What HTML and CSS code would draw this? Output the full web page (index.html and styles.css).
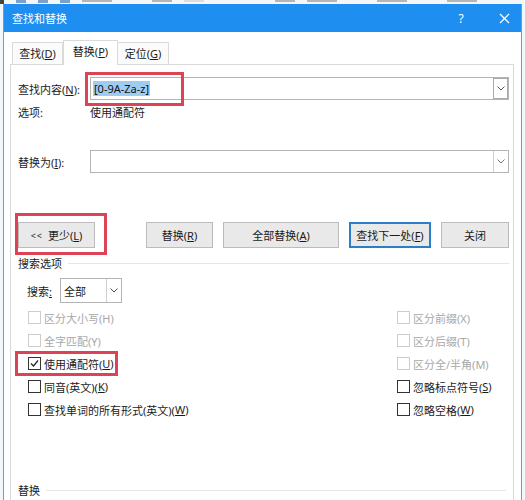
FILE: index.html
```html
<!DOCTYPE html>
<html>
<head>
<meta charset="utf-8">
<title>查找和替换</title>
<link rel="stylesheet" href="styles.css">
</head>
<body>
<div class="behind">
  <span class="mark m-dark"></span><span class="mark m-blue"></span><span class="mark m-blue"></span><span class="mark m-blue"></span><span class="mark m-grey w30"></span><span class="mark m-grey w20"></span><span class="mark m-light w20"></span><span class="mark m-grey w20 push"></span><span class="mark m-grey w30"></span><span class="mark m-grey w30"></span><span class="mark m-grey w30"></span>
</div>
<div class="window">
  <div class="titlebar">
    <span class="title">查找和替换</span>
    <span class="tb-help">?</span>
    <span class="tb-close"><svg width="11" height="11" viewBox="0 0 11 11"><path d="M1 1L10 10M10 1L1 10" stroke="#fff" stroke-width="1.3" fill="none"/></svg></span>
  </div>
  <div class="content">
    <div class="tabs">
      <div class="tab t1">查找(<u>D</u>)</div>
      <div class="tab t2 active">替换(<u>P</u>)</div>
      <div class="tab t3">定位(<u>G</u>)</div>
    </div>
    <div class="panel">
      <div class="field-row">
        <span class="field-label">查找内容(<u>N</u>):</span>
        <div class="combo">
          <span class="sel">[0-9A-Za-z]</span>
          <span class="drop focus-drop"><svg width="8" height="5" viewBox="0 0 8 5"><path d="M0.5 0.5L4 4L7.5 0.5" stroke="#555" stroke-width="1" fill="none"/></svg></span>
          <span class="redbox rb-find"></span>
        </div>
      </div>
      <div class="opt-row">
        <span class="field-label">选项:</span>
        <span>使用通配符</span>
      </div>
      <div class="field-row replace-row">
        <span class="field-label">替换为(<u>I</u>):</span>
        <div class="combo">
          <span class="drop"><svg width="8" height="5" viewBox="0 0 8 5"><path d="M0.5 0.5L4 4L7.5 0.5" stroke="#777" stroke-width="1" fill="none"/></svg></span>
        </div>
      </div>
      <div class="buttons">
        <div class="btn b-less"><span class="chev">&lt;&lt;</span>更少(<u>L</u>)<span class="redbox rb-less"></span></div>
        <div class="btn b-rep">替换(<u>R</u>)</div>
        <div class="btn b-all">全部替换(<u>A</u>)</div>
        <div class="btn b-next">查找下一处(<u>F</u>)</div>
        <div class="btn b-close">关闭</div>
      </div>
      <div class="legend l-search"><span>搜索选项</span><span class="rule"></span></div>
      <div class="search-row">
        <span class="search-label">搜索<u>:</u></span>
        <div class="select">
          <span class="select-text">全部</span>
          <span class="drop"><svg width="8" height="5" viewBox="0 0 8 5"><path d="M0.5 0.5L4 4L7.5 0.5" stroke="#555" stroke-width="1" fill="none"/></svg></span>
        </div>
      </div>
      <div class="checks">
        <div class="chk disabled"><span class="box"></span>区分大小写(H)</div>
        <div class="chk disabled"><span class="box"></span>区分前缀(X)</div>
        <div class="chk disabled"><span class="box"></span>全字匹配(Y)</div>
        <div class="chk disabled"><span class="box"></span>区分后缀(T)</div>
        <div class="chk"><span class="box"><svg width="11" height="11" viewBox="0 0 11 11"><path d="M2 5.5L4.5 8L9 2.5" stroke="#222" stroke-width="1.2" fill="none"/></svg></span>使用通配符(<u>U</u>)<span class="redbox rb-wild"></span></div>
        <div class="chk disabled"><span class="box"></span>区分全/半角(M)</div>
        <div class="chk"><span class="box"></span>同音(英文)(<u>K</u>)</div>
        <div class="chk"><span class="box"></span>忽略标点符号(<u>S</u>)</div>
        <div class="chk"><span class="box"></span>查找单词的所有形式(英文)(<u>W</u>)</div>
        <div class="chk"><span class="box"></span>忽略空格(<u>W</u>)</div>
      </div>
      <div class="legend l-replace"><span>替换</span><span class="rule"></span></div>
    </div>
  </div>
</div>
</body>
</html>
```
FILE: styles.css
```css
html, body {
  margin: 0;
  height: 500px;
  overflow: hidden;
}
body {
  background: #f4f7fa;
  font-family: "Noto Sans", "Noto Sans CJK SC", sans-serif;
  font-size: 11px;
  color: #1b1b1b;
}
u { text-decoration: underline; text-underline-offset: 1px; }

.behind {
  height: 4px;
  overflow: hidden;
  display: flex;
  align-items: flex-start;
  gap: 12px;
  padding-right: 20px;
}
.mark { height: 3px; width: 10px; flex: none; }
.m-dark { background: #444; width: 4px; height: 4px; }
.m-blue { background: #7d9fcc; }
.m-grey { background: #b5b5b5; height: 2px; }
.m-light { background: #dcdcdc; height: 2px; }
.w20 { width: 20px; }
.w30 { width: 30px; margin-right: 28px; }
.push { margin-left: auto; }

.window {
  margin-left: 3px;
  width: 517px;
  height: 496px;
  border-left: 1px solid #5aa3db;
  border-right: 1px solid #5aa3db;
  background: #fff;
  display: flex;
  flex-direction: column;
}
.titlebar {
  height: 28px;
  flex: none;
  background: #1e8ff0;
  color: #fff;
  display: flex;
  align-items: center;
  padding-left: 8px;
}
.title { font-size: 11px; }
.tb-help {
  margin-left: auto;
  width: 34px;
  text-align: center;
  font-size: 12px;
  margin-right: 9px;
}
.tb-close {
  width: 34px;
  display: flex;
  justify-content: center;
  align-items: center;
}

.content {
  flex: 1;
  display: flex;
  flex-direction: column;
  padding: 8px 7px 0 6px;
}
.tabs {
  display: flex;
  align-items: flex-end;
  height: 24px;
  padding-left: 2px;
}
.tab {
  box-sizing: border-box;
  height: 22px;
  border: 1px solid #dadada;
  border-bottom: none;
  background: #fbfbfb;
  display: flex;
  align-items: center;
  justify-content: center;
  line-height: 14px;
}
.t1 { width: 51px; }
.t2 { width: 55px; }
.t3 { width: 51px; border-left: none; }
.tab.active {
  height: 25px;
  margin-bottom: -1px;
  background: #fff;
  position: relative;
  z-index: 1;
  padding-bottom: 2px;
}

.panel {
  flex: 1;
  border: 1px solid #dadada;
  border-bottom: none;
  padding: 12px 4px 0 7px;
}

.field-row {
  display: flex;
  align-items: center;
  height: 23px;
}
.field-label {
  width: 72px;
  flex: none;
}
.combo {
  position: relative;
  flex: 1;
  height: 23px;
  box-sizing: border-box;
  border: 1px solid #b4b4b4;
  display: flex;
  align-items: center;
  padding-left: 2px;
}
.sel {
  background: #9fcdf2;
  line-height: 15px;
  padding: 0 1px;
  color: #111;
}
.drop {
  margin-left: auto;
  width: 15px;
  align-self: stretch;
  box-sizing: border-box;
  border-left: 1px solid #cfcfcf;
  display: flex;
  align-items: center;
  justify-content: center;
}
.focus-drop {
  border: 1px solid #a9a9a9;
  margin: 0;
  margin-left: auto;
}

.redbox {
  position: absolute;
  box-sizing: border-box;
  border: 3px solid #dc4355;
  pointer-events: none;
}
.rb-find { left: -6px; top: -6px; width: 99px; height: 34px; }
.rb-less { left: -4px; top: -10px; width: 92px; height: 42px; }
.rb-wild { left: -13px; top: -1px; width: 103px; height: 25px; }

.opt-row {
  display: flex;
  align-items: center;
  height: 16px;
  margin-top: 4px;
}
.replace-row { margin-top: 30px; }

.buttons {
  display: flex;
  gap: 10px;
  margin-top: 49px;
  height: 26px;
}
.btn {
  box-sizing: border-box;
  height: 26px;
  border: 1px solid #bcbcbc;
  background: #e9e9e9;
  display: flex;
  align-items: center;
  justify-content: center;
  position: relative;
}
.chev { font-size: 9px; letter-spacing: 1px; margin-right: 5px; }
.b-less { width: 77px; margin-right: auto; }
.b-rep { width: 67px; }
.b-all { width: 116px; }
.b-next { width: 82px; border: 2px solid #2b7fc8; }
.b-close { width: 68px; }

.legend {
  display: flex;
  align-items: center;
  height: 14px;
}
.legend .rule {
  flex: 1;
  border-top: 1px solid #e6e6e6;
  margin-left: 6px;
}
.l-search { margin-top: 8px; }
.l-replace { margin-top: 62px; }
.l-replace .rule { margin-right: 3px; }

.search-row {
  display: flex;
  align-items: center;
  margin-top: 8px;
  padding-left: 9px;
  height: 25px;
}
.search-label { width: 33px; }
.select {
  width: 62px;
  height: 25px;
  box-sizing: border-box;
  border: 1px solid #b4b4b4;
  display: flex;
  align-items: center;
}
.select-text { padding-left: 3px; }

.checks {
  display: grid;
  grid-template-columns: 369px 1fr;
  grid-auto-rows: 23px;
  margin-top: 3px;
  padding-left: 10px;
}
.chk {
  display: flex;
  align-items: center;
  position: relative;
}
.box {
  box-sizing: border-box;
  width: 13px;
  height: 13px;
  border: 1px solid #333;
  margin-right: 3px;
  display: flex;
  align-items: center;
  justify-content: center;
}
.chk.disabled { color: #a8a8a8; }
.chk.disabled .box { border-color: #cdcdcd; }
```
